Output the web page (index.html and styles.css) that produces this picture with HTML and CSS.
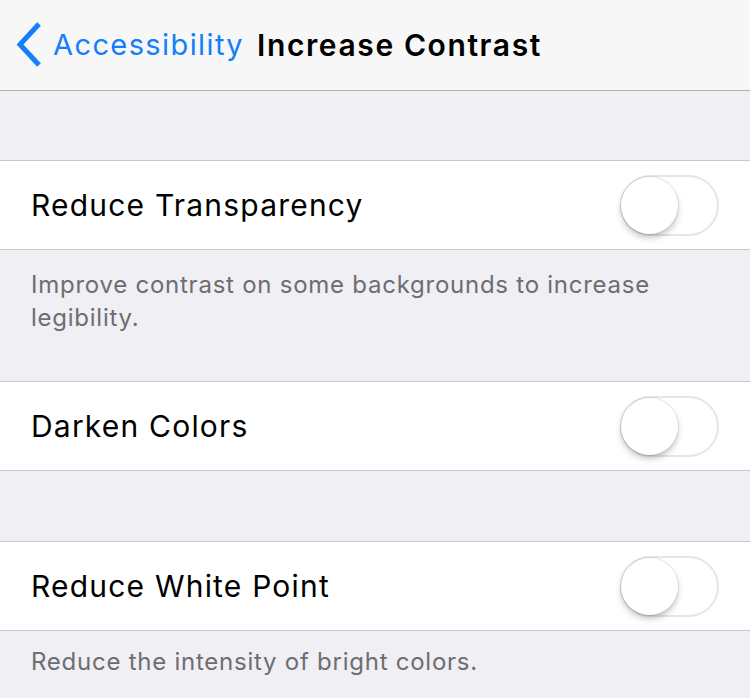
FILE: index.html
```html
<!DOCTYPE html>
<html lang="en">

<head>
    <meta charset="UTF-8">
    <meta name="viewport" content="width=device-width, initial-scale=1.0">
    <title>Increase Contrast</title>
    <link rel="stylesheet" href="styles.css">
</head>

<body>
    <header class="navBar">
        <a class="backLink" href="#">
            <svg class="chevron" width="28" height="46" viewBox="0 0 28 46">
                <polyline points="24,2 5,22.5 24,43" fill="none" stroke="#147efb" stroke-width="5" stroke-linecap="butt" stroke-linejoin="miter" />
            </svg>
            <span>Accessibility</span>
        </a>
        <h1 class="navTitle">Increase Contrast</h1>
    </header>

    <main class="settingsList">
        <div class="groupGap"></div>

        <!-- Reduce Transparency -->
        <div class="cellRow">
            <span class="cellLabel">Reduce Transparency</span>
            <label class="switch">
                <input type="checkbox">
                <span class="knob"></span>
            </label>
        </div>
        <p class="groupFooter">Improve contrast on some backgrounds to increase legibility.</p>

        <!-- Darken Colors -->
        <div class="cellRow">
            <span class="cellLabel">Darken Colors</span>
            <label class="switch">
                <input type="checkbox">
                <span class="knob"></span>
            </label>
        </div>
        <div class="groupGap small"></div>

        <!-- Reduce White Point -->
        <div class="cellRow">
            <span class="cellLabel">Reduce White Point</span>
            <label class="switch">
                <input type="checkbox">
                <span class="knob"></span>
            </label>
        </div>
        <p class="groupFooter last">Reduce the intensity of bright colors.</p>
    </main>
</body>

</html>
```

FILE: styles.css
```css
* {
    box-sizing: border-box;
}

body {
    margin: 0;
    background-color: #efeff4;
    font-family: Inter, "Liberation Sans", sans-serif;
    color: #000;
    height: 698px;
    overflow: hidden;
}

.navBar {
    height: 91px;
    display: flex;
    align-items: center;
    background-color: #f7f7f8;
    border-bottom: 1px solid #b2b2b2;
    padding: 0 0 1px 15px;
}

.backLink {
    display: flex;
    align-items: center;
    color: #147efb;
    text-decoration: none;
    font-size: 29px;
    letter-spacing: 1.4px;
}

.chevron {
    margin-right: 10px;
}

.navTitle {
    margin: 0 0 0 13px;
    font-size: 30px;
    font-weight: 600;
    letter-spacing: 1.6px;
}

.groupGap {
    height: 69px;
}

.groupGap.small {
    height: 70px;
}

.cellRow {
    height: 90px;
    display: flex;
    align-items: center;
    justify-content: space-between;
    background-color: #fff;
    border-top: 1px solid #c8c7cc;
    border-bottom: 1px solid #c8c7cc;
    padding: 0 31px;
}

.cellLabel {
    font-size: 30px;
    letter-spacing: 1.2px;
}

.groupFooter {
    margin: 0;
    height: 131px;
    padding: 18px 31px 0;
    font-size: 24px;
    line-height: 33px;
    letter-spacing: 0.75px;
    color: #6d6d72;
}

.groupFooter.last {
    height: auto;
    padding-top: 14px;
}

.switch {
    position: relative;
    width: 99px;
    height: 61px;
    cursor: pointer;
}

.switch input {
    display: none;
}

.switch::before {
    content: "";
    position: absolute;
    inset: 0;
    border: 2px solid #e6e6e6;
    border-radius: 31px;
    background-color: #fff;
}

.knob {
    position: absolute;
    top: 2px;
    left: 1px;
    width: 57px;
    height: 57px;
    border-radius: 50%;
    background-color: #fff;
    box-shadow: 0 0 0 1px rgba(0, 0, 0, 0.08), 0 4px 6px rgba(0, 0, 0, 0.22);
}
```
